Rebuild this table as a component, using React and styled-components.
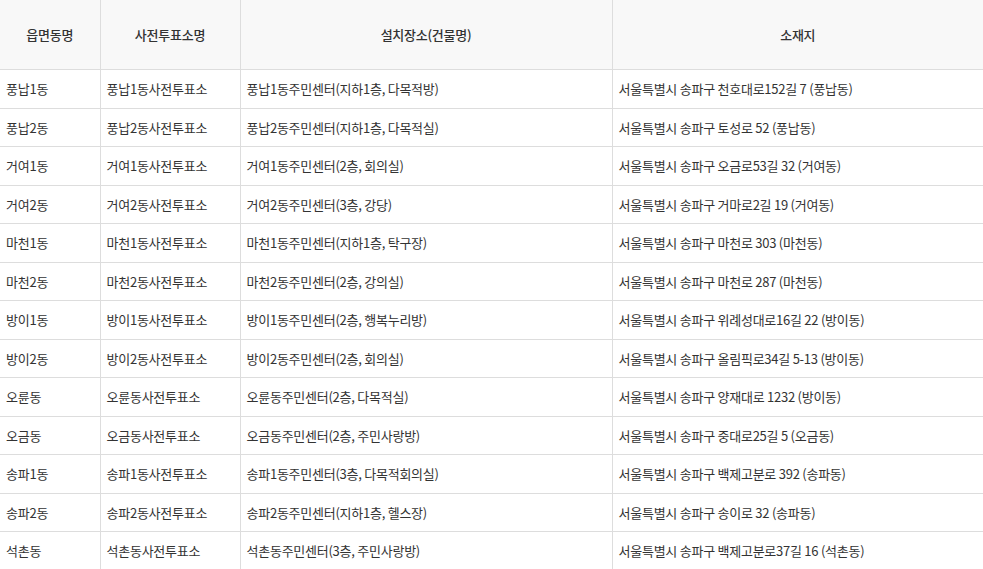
import React from "react";
import styled, { createGlobalStyle } from "styled-components";

const rows = [
  ["풍납1동", "풍납1동사전투표소", "풍납1동주민센터(지하1층, 다목적방)", "서울특별시 송파구 천호대로152길 7 (풍납동)"],
  ["풍납2동", "풍납2동사전투표소", "풍납2동주민센터(지하1층, 다목적실)", "서울특별시 송파구 토성로 52 (풍납동)"],
  ["거여1동", "거여1동사전투표소", "거여1동주민센터(2층, 회의실)", "서울특별시 송파구 오금로53길 32 (거여동)"],
  ["거여2동", "거여2동사전투표소", "거여2동주민센터(3층, 강당)", "서울특별시 송파구 거마로2길 19 (거여동)"],
  ["마천1동", "마천1동사전투표소", "마천1동주민센터(지하1층, 탁구장)", "서울특별시 송파구 마천로 303 (마천동)"],
  ["마천2동", "마천2동사전투표소", "마천2동주민센터(2층, 강의실)", "서울특별시 송파구 마천로 287 (마천동)"],
  ["방이1동", "방이1동사전투표소", "방이1동주민센터(2층, 행복누리방)", "서울특별시 송파구 위례성대로16길 22 (방이동)"],
  ["방이2동", "방이2동사전투표소", "방이2동주민센터(2층, 회의실)", "서울특별시 송파구 올림픽로34길 5-13 (방이동)"],
  ["오륜동", "오륜동사전투표소", "오륜동주민센터(2층, 다목적실)", "서울특별시 송파구 양재대로 1232 (방이동)"],
  ["오금동", "오금동사전투표소", "오금동주민센터(2층, 주민사랑방)", "서울특별시 송파구 중대로25길 5 (오금동)"],
  ["송파1동", "송파1동사전투표소", "송파1동주민센터(3층, 다목적회의실)", "서울특별시 송파구 백제고분로 392 (송파동)"],
  ["송파2동", "송파2동사전투표소", "송파2동주민센터(지하1층, 헬스장)", "서울특별시 송파구 송이로 32 (송파동)"],
  ["석촌동", "석촌동사전투표소", "석촌동주민센터(3층, 주민사랑방)", "서울특별시 송파구 백제고분로37길 16 (석촌동)"],
];

const columns = [
  { title: "읍면동명", width: 100 },
  { title: "사전투표소명", width: 140 },
  { title: "설치장소(건물명)", width: 372 },
  { title: "소재지", width: 371 },
];

const GlobalStyle = createGlobalStyle`
  body {
    margin: 0;
    background: #fff;
    font-family: "Noto Sans CJK KR", "Noto Sans", sans-serif;
    color: #333;
  }
`;

const Table = styled.table`
  width: 983px;
  border-collapse: collapse;
  table-layout: fixed;
  font-size: 13px;
  line-height: 18px;
  letter-spacing: -0.25px;
`;

const HeadCell = styled.th`
  height: 69px;
  padding: 0;
  background: #f8f8f8;
  font-weight: 500;
  color: #333;
  text-align: center;
  border-bottom: 1px solid #ddd;
  border-left: ${(p) => (p.$first ? "none" : "1px solid #ddd")};
`;

const Cell = styled.td`
  height: 36.5px;
  padding: 1px 0 0 6px;
  text-align: left;
  white-space: nowrap;
  border-bottom: 1px solid #ddd;
  border-left: ${(p) => (p.$first ? "none" : "1px solid #ddd")};
`;

export default function App() {
  return (
    <>
      <GlobalStyle />
      <Table>
        <colgroup>
          {columns.map((c) => (
            <col key={c.title} style={{ width: c.width }} />
          ))}
        </colgroup>
        <thead>
          <tr>
            {columns.map((c, i) => (
              <HeadCell key={c.title} $first={i === 0}>
                {c.title}
              </HeadCell>
            ))}
          </tr>
        </thead>
        <tbody>
          {rows.map((r) => (
            <tr key={r[0]}>
              {r.map((v, i) => (
                <Cell key={i} $first={i === 0}>
                  {v}
                </Cell>
              ))}
            </tr>
          ))}
        </tbody>
      </Table>
    </>
  );
}
